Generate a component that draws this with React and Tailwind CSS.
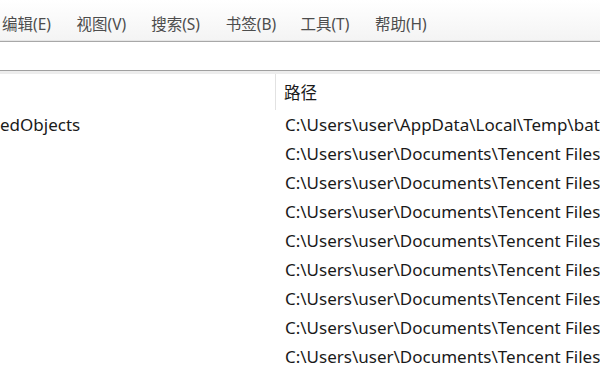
const menus = ["编辑(E)", "视图(V)", "搜索(S)", "书签(B)", "工具(T)", "帮助(H)"];

const rows = [
  { name: "edObjects", path: "C:\\Users\\user\\AppData\\Local\\Temp\\batch" },
  { name: "", path: "C:\\Users\\user\\Documents\\Tencent Files\\" },
  { name: "", path: "C:\\Users\\user\\Documents\\Tencent Files\\" },
  { name: "", path: "C:\\Users\\user\\Documents\\Tencent Files\\" },
  { name: "", path: "C:\\Users\\user\\Documents\\Tencent Files\\" },
  { name: "", path: "C:\\Users\\user\\Documents\\Tencent Files\\" },
  { name: "", path: "C:\\Users\\user\\Documents\\Tencent Files\\" },
  { name: "", path: "C:\\Users\\user\\Documents\\Tencent Files\\" },
  { name: "", path: "C:\\Users\\user\\Documents\\Tencent Files\\" },
];

export default function App() {
  return (
    <div
      className="flex h-[377px] w-[600px] flex-col overflow-hidden bg-white"
      style={{ fontFamily: '"Noto Sans", "Noto Sans CJK SC", sans-serif' }}
    >
      {/* menu bar */}
      <div className="flex h-[40px] shrink-0 items-end bg-gradient-to-b from-white to-[#f4f4f4] pb-[6px] pl-[2px]">
        {menus.map((m) => (
          <span
            key={m}
            className="w-[74.6px] shrink-0 whitespace-nowrap text-[15.5px] leading-[20px] text-[#4d4d4d]"
          >
            {m}
          </span>
        ))}
      </div>
      <div className="h-[2px] shrink-0 border-b border-[#a8a8a8] bg-[#e6e6e6]" />

      {/* toolbar */}
      <div className="h-[28px] shrink-0 bg-white" />
      <div className="h-[1px] shrink-0 bg-[#a0a0a0]" />
      <div className="h-[3px] shrink-0 bg-[#ededed]" />

      {/* list header */}
      <div className="flex h-[36px] shrink-0">
        <div className="w-[276px] shrink-0 border-r border-[#e2e2e2]" />
        <div className="flex items-end pb-[6px] pl-[8px] text-[16.5px] leading-[22px] text-[#1a1a1a]">路径</div>
      </div>

      {/* rows */}
      <div className="flex flex-col">
        {rows.map((r, i) => (
          <div key={i} className="flex h-[29px] items-center text-[17px] text-[#1a1a1a]">
            <div className="w-[276px] shrink-0 whitespace-nowrap">{r.name}</div>
            <div className="whitespace-nowrap pl-[9px]">{r.path}</div>
          </div>
        ))}
      </div>
    </div>
  );
}
